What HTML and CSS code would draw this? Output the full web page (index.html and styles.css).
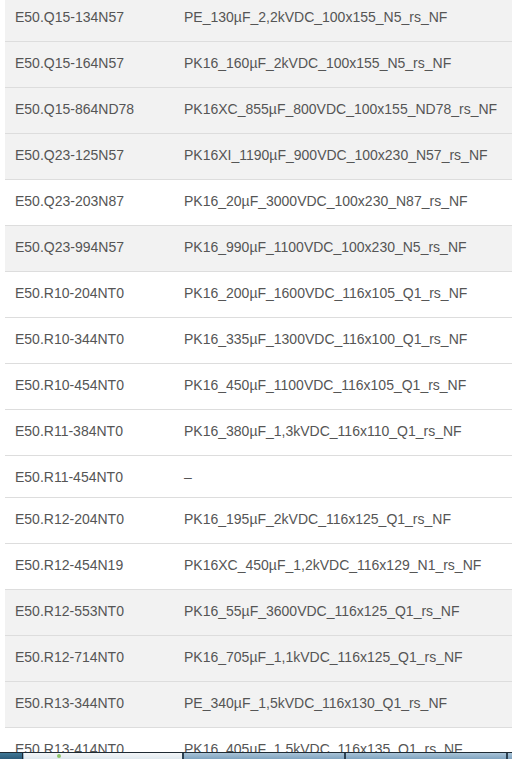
FILE: index.html
```html
<!DOCTYPE html>
<html lang="en">
<head>
    <meta charset="UTF-8">
    <title>Capacitor cross reference</title>
    <link rel="stylesheet" href="styles.css">
</head>
<body>

<div id="list-container">
    <table id="parts">
        <tr class="shaded"><td>E50.Q15-134N57</td><td>PE_130µF_2,2kVDC_100x155_N5_rs_NF</td></tr>
        <tr class="shaded"><td>E50.Q15-164N57</td><td>PK16_160µF_2kVDC_100x155_N5_rs_NF</td></tr>
        <tr class="shaded"><td>E50.Q15-864ND78</td><td>PK16XC_855µF_800VDC_100x155_ND78_rs_NF</td></tr>
        <tr class="shaded"><td>E50.Q23-125N57</td><td>PK16XI_1190µF_900VDC_100x230_N57_rs_NF</td></tr>
        <tr><td>E50.Q23-203N87</td><td>PK16_20µF_3000VDC_100x230_N87_rs_NF</td></tr>
        <tr class="shaded"><td>E50.Q23-994N57</td><td>PK16_990µF_1100VDC_100x230_N5_rs_NF</td></tr>
        <tr><td>E50.R10-204NT0</td><td>PK16_200µF_1600VDC_116x105_Q1_rs_NF</td></tr>
        <tr><td>E50.R10-344NT0</td><td>PK16_335µF_1300VDC_116x100_Q1_rs_NF</td></tr>
        <tr><td>E50.R10-454NT0</td><td>PK16_450µF_1100VDC_116x105_Q1_rs_NF</td></tr>
        <tr><td>E50.R11-384NT0</td><td>PK16_380µF_1,3kVDC_116x110_Q1_rs_NF</td></tr>
        <tr class="short"><td>E50.R11-454NT0</td><td>–</td></tr>
        <tr><td>E50.R12-204NT0</td><td>PK16_195µF_2kVDC_116x125_Q1_rs_NF</td></tr>
        <tr><td>E50.R12-454N19</td><td>PK16XC_450µF_1,2kVDC_116x129_N1_rs_NF</td></tr>
        <tr class="shaded"><td>E50.R12-553NT0</td><td>PK16_55µF_3600VDC_116x125_Q1_rs_NF</td></tr>
        <tr class="shaded"><td>E50.R12-714NT0</td><td>PK16_705µF_1,1kVDC_116x125_Q1_rs_NF</td></tr>
        <tr class="shaded"><td>E50.R13-344NT0</td><td>PE_340µF_1,5kVDC_116x130_Q1_rs_NF</td></tr>
        <tr><td>E50.R13-414NT0</td><td>PK16_405µF_1,5kVDC_116x135_Q1_rs_NF</td></tr>
    </table>
</div>

<!-- window taskbar peeking in at the bottom -->
<div id="taskbar">
    <div class="start"></div>
    <div class="tab active"><span class="dot"></span></div>
    <div class="tab"></div>
    <div class="tab"></div>
    <div class="tab"></div>
</div>

</body>
</html>
```

FILE: styles.css
```css
body {
    margin: 0;
    overflow: hidden;
    height: 759px;
    font-family: 'Liberation Sans', Arial, sans-serif;
    font-size: 14px;
    color: #555;
    background: #fff;
}

#list-container {
    padding-left: 5px;
    margin-top: -5px; /* page is scrolled a little */
}

#parts {
    width: 100%;
    border-collapse: collapse;
}

#parts td {
    border-top: 1px solid #ddd;
    padding: 11px 10px 14px;
    line-height: 20px;
    white-space: nowrap;
    vertical-align: top;
}

#parts td:first-child {
    width: 149px;
}

#parts tr.shaded {
    background: #f2f2f2;
}

#parts tr.short td {
    padding-bottom: 10px;
}

#taskbar {
    position: fixed;
    left: 0;
    right: 0;
    bottom: 0;
    height: 6px;
    border-top: 1px solid #1e2a33;
    background: linear-gradient(#a9c4d8, #7fa3bf);
    display: flex;
}

#taskbar .start {
    width: 22px;
    background: linear-gradient(#3f7896, #2b5a78);
    border-right: 1px solid #1e2a33;
}

#taskbar .tab {
    width: 160px;
    border-right: 2px solid #2c4152;
    position: relative;
}

#taskbar .tab.active {
    width: 158px;
    margin-left: 1px;
    background: linear-gradient(#f3f6f8, #dfe8ee);
}

#taskbar .tab:last-child {
    flex: 1;
    border-right: none;
}

#taskbar .dot {
    position: absolute;
    left: 33px;
    top: 1px;
    width: 4px;
    height: 4px;
    border-radius: 50%;
    background: #8cc36a;
}
```
